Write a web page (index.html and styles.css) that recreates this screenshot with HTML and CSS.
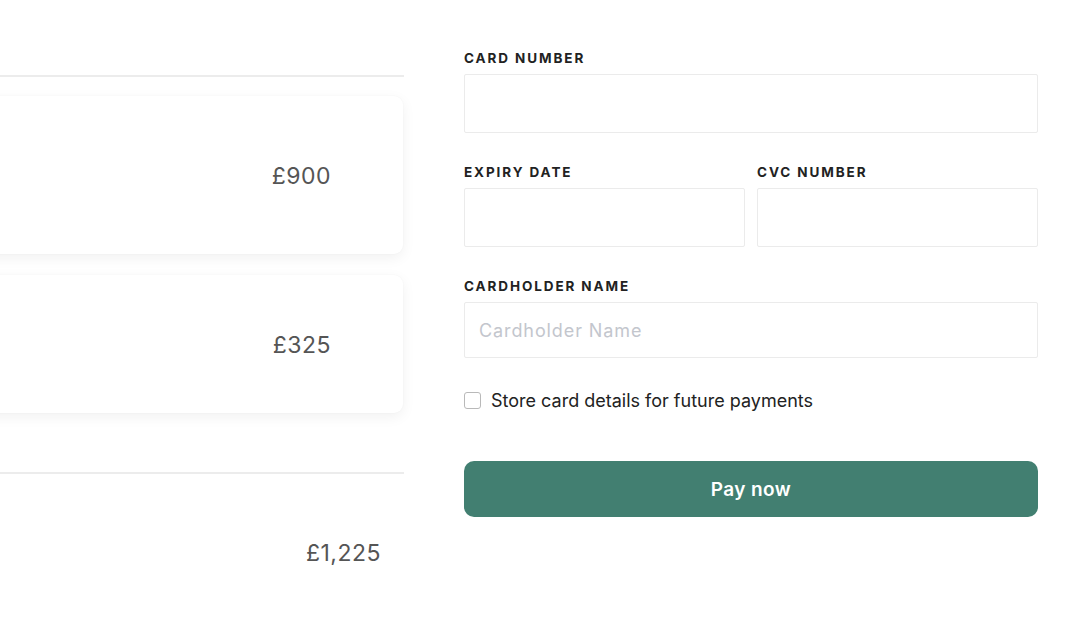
FILE: index.html
```html
<!DOCTYPE html>
<html lang="en">
<head>
<meta charset="utf-8">
<title>Checkout</title>
<link rel="stylesheet" href="styles.css">
</head>
<body>
<div class="page">
  <section class="summary">
    <div class="divider top"></div>
    <div class="item item-a"><span class="price">£900</span></div>
    <div class="item item-b"><span class="price">£325</span></div>
    <div class="divider bottom"></div>
    <div class="total"><span class="total-price">£1,225</span></div>
  </section>
  <form class="payment">
    <div class="field">
      <label class="label">CARD NUMBER</label>
      <div class="input"></div>
    </div>
    <div class="row">
      <div class="field">
        <label class="label">EXPIRY DATE</label>
        <div class="input"></div>
      </div>
      <div class="field">
        <label class="label">CVC NUMBER</label>
        <div class="input"></div>
      </div>
    </div>
    <div class="field name-field">
      <label class="label">CARDHOLDER NAME</label>
      <div class="input short"><span class="placeholder">Cardholder Name</span></div>
    </div>
    <div class="check">
      <span class="box"></span>
      <span class="check-text">Store card details for future payments</span>
    </div>
    <button type="button" class="pay">Pay now</button>
  </form>
</div>
</body>
</html>
```
FILE: styles.css
```css
* { box-sizing: border-box; }
html, body { margin: 0; padding: 0; background: #fff; }
body { font-family: Inter, "Noto Sans", sans-serif; color: #222; width: 1076px; height: 620px; overflow: hidden; }

.page { display: flex; gap: 60px; }

.summary { width: 404px; padding-top: 75px; display: flex; flex-direction: column; }
.divider { height: 2px; background: #ececec; }
.item {
  margin-left: -20px;
  background: #fff;
  border-radius: 9px;
  box-shadow: 0 4px 14px rgba(0,0,0,0.06), 0 0 2px rgba(0,0,0,0.04);
  display: flex; align-items: center; justify-content: flex-end;
  padding-right: 72px;
  margin-right: 1px;
}
.item-a { height: 158px; margin-top: 19px; }
.item-b { height: 138px; margin-top: 21px; }
.price, .total-price { font-size: 23px; color: #555; letter-spacing: 0.5px; }
.price { padding-top: 2px; }
.divider.bottom { margin-top: 59px; }
.total { height: 158px; display: flex; justify-content: flex-end; padding-right: 23px; padding-top: 64px; }
.total-price { line-height: 30px; }

.payment { width: 574px; padding-top: 50px; display: flex; flex-direction: column; }
.field { display: flex; flex-direction: column; }
.row .field { flex: 1; }
.label { font-size: 13.5px; font-weight: 700; letter-spacing: 1.9px; line-height: 16px; color: #222; margin-bottom: 8px; }
.input { height: 59px; border: 1px solid #ebebeb; border-radius: 2px; background: #fff; display: flex; align-items: center; padding-left: 14px; }
.input.short { height: 56px; }
.row { display: flex; gap: 12px; margin-top: 31px; }
.name-field { margin-top: 31px; }
.placeholder { font-size: 18px; letter-spacing: 0.9px; color: #c3c6cd; }

.check { display: flex; align-items: center; gap: 10px; margin-top: 34px; height: 16px; }
.box { width: 17px; height: 17px; border: 1.5px solid #b9b9b9; border-radius: 3px; }
.check-text { font-size: 18px; color: #222; }

.pay {
  margin-top: 53px; height: 56px; border: 0; border-radius: 10px;
  background: #427f71; color: #fff; font-family: Inter, "Noto Sans", sans-serif;
  font-size: 19px; font-weight: 600; letter-spacing: 0.4px;
}
```
